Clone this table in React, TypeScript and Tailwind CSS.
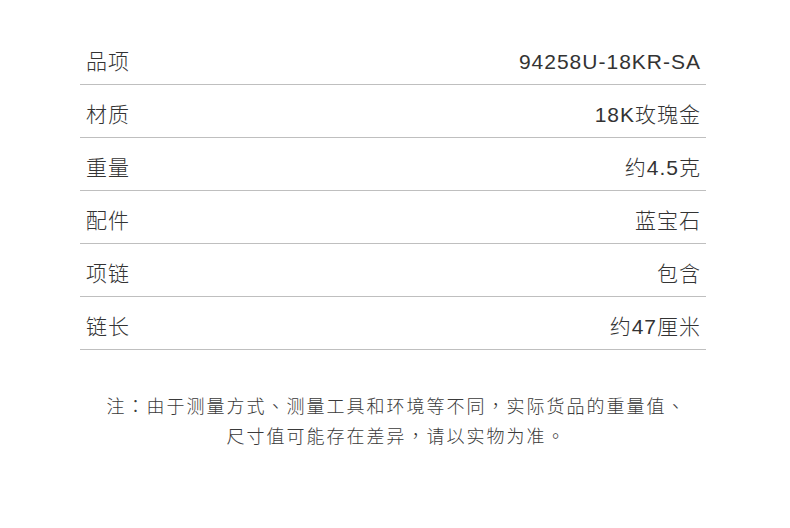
const specs = [
  { label: "品项", value: "94258U-18KR-SA" },
  { label: "材质", value: "18K玫瑰金" },
  { label: "重量", value: "约4.5克" },
  { label: "配件", value: "蓝宝石" },
  { label: "项链", value: "包含" },
  { label: "链长", value: "约47厘米" },
];

const App = () => {
  return (
    <div
      className="w-[790px] h-[528px] bg-white text-[#333333] overflow-hidden"
      style={{ fontFamily: '"Liberation Sans", "Noto Sans CJK TC", sans-serif' }}
    >
      {/* Spec table */}
      <div className="ml-[80px] mt-[32px] w-[626px]">
        {specs.map((row) => (
          <div
            key={row.label}
            className="flex items-center justify-between h-[53px] pt-[15px] pb-[7px] pl-[6px] pr-[5px] border-b border-[#bfbfbf] text-[21px] leading-[30px] tracking-[1px] font-light"
          >
            <span>{row.label}</span>
            <span>{row.value}</span>
          </div>
        ))}
      </div>

      {/* Note */}
      <div className="mt-[42px] pl-[3px] text-center text-[18px] leading-[30px] tracking-[2px] font-light text-[#3a3a3a]">
        <p>注：由于测量方式、测量工具和环境等不同，实际货品的重量值、</p>
        <p>尺寸值可能存在差异，请以实物为准。</p>
      </div>
    </div>
  );
};

export default App;
